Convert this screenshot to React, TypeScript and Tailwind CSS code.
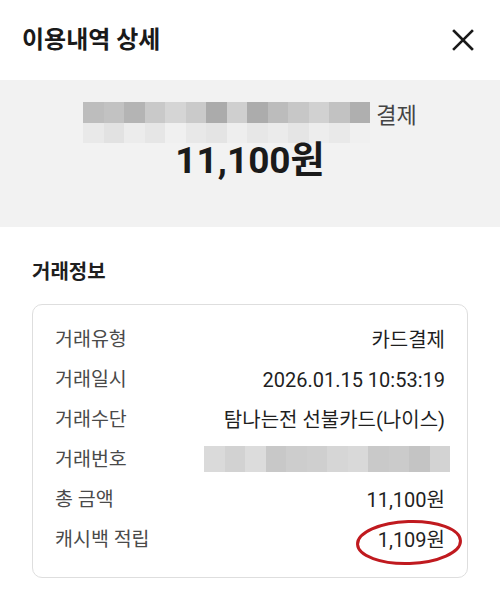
import type { ReactNode } from 'react';

const FONT = { fontFamily: 'Roboto, "Noto Sans CJK KR", sans-serif' };

// 모자이크 처리된 텍스트 영역
const MOSAIC_TOP = ['#bdbdbd', '#c2c2c2', '#b4b4b4', '#c9c9c9', '#d5d5d5', '#cacaca', '#ababab', '#cfcfcf', '#acacac', '#bcbcbc', '#c7c7c7', '#d1d1d1', '#c2c2c2', '#afafaf'];
const MOSAIC_BOTTOM = ['#e9e9e9', '#e2e2e2', '#ececec', '#e6e6e6', '#f0f0f0', '#e8e8e8', '#e4e4e4', '#eeeeee', '#e7e7e7', '#ebebeb', '#e5e5e5', '#ededed', '#e9e9e9', '#f0f0f0'];
const MOSAIC_NUM = ['#dadada', '#d2d2d2', '#dcdcdc', '#c8c8c8', '#cdcdcd', '#cfcfcf', '#d6d6d6', '#d9d9d9', '#c9c9c9', '#cbcbcb', '#c4c4c4', '#d3d3d3'];

function Mosaic({ colors, cell, height }: { colors: string[]; cell: number; height: number }) {
  return (
    <div className="flex">
      {colors.map((c, i) => (
        <div key={i} style={{ background: c, width: cell, height }} />
      ))}
    </div>
  );
}

function Row({ label, children }: { label: string; children: ReactNode }) {
  return (
    <div className="flex h-10 items-center justify-between">
      <span className="text-[19.5px] text-[#4a4a4a]">{label}</span>
      <span className="text-[20px] text-[#1f1f1f]">{children}</span>
    </div>
  );
}

export default function App() {
  return (
    <div className="h-[596px] w-[500px] bg-white" style={FONT}>
      {/* 헤더 */}
      <div className="flex h-20 items-center justify-between pl-[22px] pr-[26px]">
        <h1 className="text-[24px] font-bold text-[#1a1a1a]">이용내역 상세</h1>
        <svg width="22" height="22" viewBox="0 0 22 22" fill="none" stroke="#1a1a1a" strokeWidth="2.6" strokeLinecap="square">
          <path d="M2 2 L20 20 M20 2 L2 20" />
        </svg>
      </div>

      {/* 금액 요약 */}
      <div className="flex h-[147px] flex-col items-center bg-[#f2f2f2] pt-[22px]">
        <div className="flex items-start">
          <div className="flex flex-col">
            <Mosaic colors={MOSAIC_TOP} cell={20.5} height={21} />
            <Mosaic colors={MOSAIC_BOTTOM} cell={20.5} height={20} />
          </div>
          <span className="ml-[6px] mt-[2px] text-[22px] leading-[24px] text-[#444]">결제</span>
        </div>
        <div className="-mt-[2px] text-[37px] font-bold leading-[40px] text-[#1a1a1a]">11,100원</div>
      </div>

      {/* 거래정보 */}
      <div className="px-8 pt-[32px]">
        <h2 className="text-[20px] font-semibold leading-[26px] text-[#1f1f1f]">거래정보</h2>
        <div className="mt-[19px] rounded-[10px] border border-[#dedede] px-[22px] pb-[17px] pt-[15px]">
          <Row label="거래유형">카드결제</Row>
          <Row label="거래일시">2026.01.15 10:53:19</Row>
          <Row label="거래수단">탐나는전 선불카드(나이스)</Row>
          <Row label="거래번호">
            <span className="-mr-[5px] -mt-[3px] block">
              <Mosaic colors={MOSAIC_NUM} cell={20.5} height={26} />
            </span>
          </Row>
          <Row label="총 금액">11,100원</Row>
          <Row label="캐시백 적립">
            <span className="relative inline-block">
              1,109원
              <svg className="absolute -left-[23px] -top-[6px]" width="110" height="48" viewBox="0 0 110 48" fill="none">
                <ellipse cx="54" cy="23.5" rx="51.5" ry="21" stroke="#c01a1f" strokeWidth="3" transform="rotate(-2 54 23.5)" />
              </svg>
            </span>
          </Row>
        </div>
      </div>
    </div>
  );
}
